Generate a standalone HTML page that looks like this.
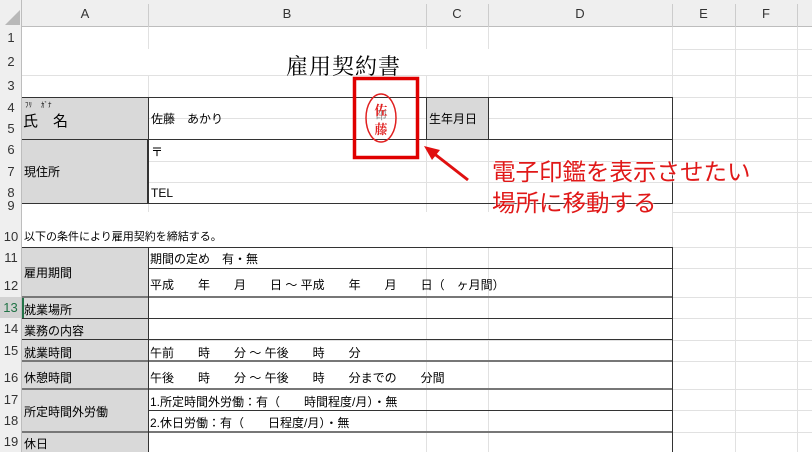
<!DOCTYPE html>
<html><head><meta charset="utf-8"><style>
*{margin:0;padding:0;box-sizing:border-box}
body{width:812px;height:452px;overflow:hidden;background:#fff;position:relative;font-family:"Liberation Sans","Noto Sans CJK JP",sans-serif;font-size:12px;color:#000}
.a{position:absolute}
.hl{position:absolute;height:1px;background:#e1e1e1}
.vl{position:absolute;width:1px;background:#e1e1e1}
.ch{position:absolute;top:0;height:27px;line-height:27px;text-align:center;color:#333;font-size:13px}
.rh{position:absolute;left:0;width:22px;text-align:center;color:#333;font-size:13px}
.g{position:absolute;background:#d9d9d9}
.bl{position:absolute;background:#333}
.t{position:absolute;white-space:nowrap;font-size:12px}
</style></head><body>
<div class="a" style="left:0;top:0;width:812px;height:27px;background:#efefef;border-bottom:1px solid #bdbdbd"></div>
<div class="a" style="left:0;top:0;width:22px;height:452px;background:#efefef;border-right:1px solid #bdbdbd"></div>
<svg class="a" style="left:5px;top:10px" width="15" height="15"><polygon points="15,0 15,15 0,15" fill="#b8b8b8"/></svg>
<div class="ch" style="left:22px;width:126px">A</div>
<div class="ch" style="left:148px;width:278px">B</div>
<div class="ch" style="left:426px;width:62px">C</div>
<div class="ch" style="left:488px;width:184px">D</div>
<div class="ch" style="left:672px;width:63px">E</div>
<div class="ch" style="left:735px;width:62px">F</div>
<div class="vl" style="left:148px;top:4px;height:23px;background:#ccc"></div>
<div class="vl" style="left:426px;top:4px;height:23px;background:#ccc"></div>
<div class="vl" style="left:488px;top:4px;height:23px;background:#ccc"></div>
<div class="vl" style="left:672px;top:4px;height:23px;background:#ccc"></div>
<div class="vl" style="left:735px;top:4px;height:23px;background:#ccc"></div>
<div class="vl" style="left:797px;top:4px;height:23px;background:#ccc"></div>
<div class="vl" style="left:148px;top:27px;height:425px"></div>
<div class="vl" style="left:426px;top:27px;height:425px"></div>
<div class="vl" style="left:488px;top:27px;height:425px"></div>
<div class="vl" style="left:672px;top:27px;height:425px"></div>
<div class="vl" style="left:735px;top:27px;height:425px"></div>
<div class="vl" style="left:797px;top:27px;height:425px"></div>
<div class="hl" style="left:22px;width:790px;top:49px"></div>
<div class="hl" style="left:22px;width:790px;top:75px"></div>
<div class="hl" style="left:22px;width:790px;top:97px"></div>
<div class="hl" style="left:22px;width:790px;top:118px"></div>
<div class="hl" style="left:22px;width:790px;top:139px"></div>
<div class="hl" style="left:22px;width:790px;top:161px"></div>
<div class="hl" style="left:22px;width:790px;top:182px"></div>
<div class="hl" style="left:22px;width:790px;top:203px"></div>
<div class="hl" style="left:22px;width:790px;top:212px"></div>
<div class="hl" style="left:22px;width:790px;top:247px"></div>
<div class="hl" style="left:22px;width:790px;top:268px"></div>
<div class="hl" style="left:22px;width:790px;top:297px"></div>
<div class="hl" style="left:22px;width:790px;top:318px"></div>
<div class="hl" style="left:22px;width:790px;top:340px"></div>
<div class="hl" style="left:22px;width:790px;top:361px"></div>
<div class="hl" style="left:22px;width:790px;top:389px"></div>
<div class="hl" style="left:22px;width:790px;top:410px"></div>
<div class="hl" style="left:22px;width:790px;top:432px"></div>
<div class="a" style="left:22px;top:49px;width:650px;height:26px;background:#fff"></div>
<div class="a" style="left:22px;top:212px;width:650px;height:35px;background:#fff"></div>
<div class="rh" style="top:27px;line-height:22px">1</div>
<div class="rh" style="top:49px;line-height:26px">2</div>
<div class="rh" style="top:75px;line-height:22px">3</div>
<div class="rh" style="top:97px;line-height:21px">4</div>
<div class="rh" style="top:118px;line-height:21px">5</div>
<div class="rh" style="top:139px;line-height:22px">6</div>
<div class="rh" style="top:161px;line-height:21px">7</div>
<div class="rh" style="top:182px;line-height:21px">8</div>
<div class="rh" style="top:200px;line-height:12px">9</div>
<div class="rh" style="top:226px;line-height:21px">10</div>
<div class="rh" style="top:247px;line-height:21px">11</div>
<div class="rh" style="top:275px;line-height:22px">12</div>
<div class="rh" style="top:297px;line-height:21px;background:#d2d2d2;color:#217346;width:21px">13</div>
<div class="rh" style="top:318px;line-height:22px">14</div>
<div class="rh" style="top:340px;line-height:21px">15</div>
<div class="rh" style="top:366px;line-height:23px">16</div>
<div class="rh" style="top:389px;line-height:21px">17</div>
<div class="rh" style="top:410px;line-height:22px">18</div>
<div class="rh" style="top:432px;line-height:20px">19</div>
<div class="g" style="left:22px;top:97px;width:126px;height:106px"></div>
<div class="g" style="left:22px;top:247px;width:126px;height:205px"></div>
<div class="g" style="left:426px;top:97px;width:62px;height:42px"></div>
<div class="a" style="left:22px;top:296px;width:2px;height:22px;background:#217346"></div>
<div class="bl" style="left:22px;top:97px;width:650px;height:1px"></div>
<div class="bl" style="left:22px;top:139px;width:650px;height:1px"></div>
<div class="bl" style="left:22px;top:203px;width:650px;height:1px"></div>
<div class="bl" style="left:148px;top:97px;width:1px;height:42px"></div>
<div class="bl" style="left:147px;top:139px;width:2px;height:64px"></div>
<div class="bl" style="left:426px;top:97px;width:1px;height:42px"></div>
<div class="bl" style="left:488px;top:97px;width:1px;height:42px"></div>
<div class="bl" style="left:672px;top:97px;width:1px;height:107px"></div>
<div class="bl" style="left:22px;top:247px;width:650px;height:1px"></div>
<div class="bl" style="left:148px;top:268px;width:524px;height:1px"></div>
<div class="bl" style="left:22px;top:296px;width:650px;height:2px;background:#777"></div>
<div class="bl" style="left:22px;top:318px;width:650px;height:1px"></div>
<div class="bl" style="left:22px;top:339px;width:650px;height:1px"></div>
<div class="bl" style="left:22px;top:360px;width:650px;height:2px;background:#777"></div>
<div class="bl" style="left:22px;top:388px;width:650px;height:2px;background:#777"></div>
<div class="bl" style="left:148px;top:410px;width:524px;height:1px"></div>
<div class="bl" style="left:22px;top:431px;width:650px;height:2px;background:#777"></div>
<div class="bl" style="left:148px;top:247px;width:1px;height:205px"></div>
<div class="bl" style="left:672px;top:247px;width:1px;height:205px"></div>
<div class="t" style="left:286px;top:50px;font-family:'Liberation Serif','Noto Serif CJK SC',serif;font-size:22px;letter-spacing:1px">雇用契約書</div>
<div class="t" style="left:25px;top:100px;font-size:7px">ﾌﾘ　 ｶﾞﾅ</div>
<div class="t" style="left:23px;top:110px;font-size:15px">氏　名</div>
<div class="t" style="left:151px;top:110px">佐藤　あかり</div>
<div class="t" style="left:429px;top:110px">生年月日</div>
<div class="t" style="left:151px;top:143px">〒</div>
<div class="t" style="left:24px;top:163px">現住所</div>
<div class="t" style="left:151px;top:186px">TEL</div>
<div class="t" style="left:24px;top:228px;font-size:11px">以下の条件により雇用契約を締結する。</div>
<div class="t" style="left:24px;top:264px">雇用期間</div>
<div class="t" style="left:150px;top:250px">期間の定め　有・無</div>
<div class="t" style="left:150px;top:276px">平成　　年　　月　　日 ～ 平成　　年　　月　　日（　ヶ月間）</div>
<div class="t" style="left:24px;top:301px">就業場所</div>
<div class="t" style="left:24px;top:322px">業務の内容</div>
<div class="t" style="left:24px;top:344px">就業時間</div>
<div class="t" style="left:150px;top:344px">午前　　時　　分 ～ 午後　　時　　分</div>
<div class="t" style="left:24px;top:369px">休憩時間</div>
<div class="t" style="left:150px;top:369px">午後　　時　　分 ～ 午後　　時　　分までの　　分間</div>
<div class="t" style="left:24px;top:403px">所定時間外労働</div>
<div class="t" style="left:150px;top:393px">1.所定時間外労働：有（　　時間程度/月）・無</div>
<div class="t" style="left:150px;top:414px">2.休日労働：有（　　日程度/月）・無</div>
<div class="t" style="left:24px;top:435px">休日</div>
<svg class="a" style="left:340px;top:70px" width="140" height="120">
<ellipse cx="41" cy="48" rx="15" ry="24" fill="none" stroke="#e02020" stroke-width="1.5"/>
<text x="41" y="49" font-size="11" fill="#888" text-anchor="middle" font-family="Noto Sans CJK JP">印</text>
<text x="41" y="45" font-size="13" fill="#e02020" text-anchor="middle" font-weight="bold" font-family="Noto Serif CJK SC">佐</text>
<text x="41" y="64" font-size="13" fill="#e02020" text-anchor="middle" font-weight="bold" font-family="Noto Serif CJK SC">藤</text>
<rect x="14.5" y="8.5" width="63" height="79" fill="none" stroke="#e00000" stroke-width="3.5"/>
<line x1="128" y1="110" x2="92" y2="82" stroke="#e01010" stroke-width="3"/>
<polygon points="84,76 100,80 92,90" fill="#e01010"/>
</svg>
<div class="t" style="left:492px;top:157px;font-size:23.5px;color:#e01818;text-shadow:0 0 2px #fff,0 0 2px #fff;line-height:31px">電子印鑑を表示させたい<br>場所に移動する</div>
</body></html>
